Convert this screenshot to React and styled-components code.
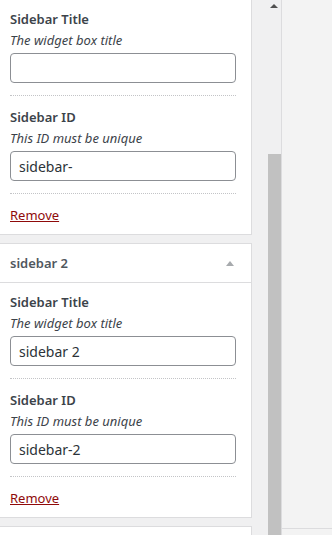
import { useLayoutEffect, useRef } from "react";
import styled, { createGlobalStyle } from "styled-components";

const GlobalStyle = createGlobalStyle`
  html, body {
    margin: 0;
    padding: 0;
    height: 100%;
    overflow: hidden;
  }
  body {
    background: #f3f3f3;
    font-family: "Noto Sans", "Open Sans", sans-serif;
    font-size: 13px;
    color: #1d2327;
  }
`;

const Screen = styled.div`
  display: flex;
  height: 535px;
`;

const Panel = styled.div`
  display: flex;
  width: 281px;
  flex-shrink: 0;
  background: #f0f0f1;
  border-right: 1px solid #dcdcde;
`;

const Viewport = styled.div`
  width: 266px;
  height: 535px;
  overflow: hidden;
`;

const List = styled.div`
  display: flex;
  flex-direction: column;
  gap: 8px;
`;

const Card = styled.section`
  width: 252px;
  box-sizing: border-box;
  background: #fff;
  border: 1px solid #dcdcde;
  border-left: 0;
  min-height: ${(p) => (p.$stub ? "20px" : "auto")};
`;

const CardHeader = styled.header`
  display: flex;
  align-items: center;
  justify-content: space-between;
  height: 38px;
  padding: 0 14px 0 10px;
  border-bottom: 1px solid #dcdcde;
  font-weight: 600;
  color: #50575e;
`;

const Toggle = styled.span`
  display: flex;
  justify-content: center;
  width: 14px;

  &::before {
    content: "";
    border-left: 4px solid transparent;
    border-right: 4px solid transparent;
    border-bottom: 5px solid #a7aaad;
  }
`;

const CardBody = styled.div`
  padding: 0 15px 0 10px;
`;

const Field = styled.div`
  padding: ${(p) => (p.$first ? "9px" : "11px")} 0 12px;
  border-bottom: 1px dotted #c3c4c7;
`;

const Label = styled.div`
  font-weight: 600;
  line-height: 21px;
  color: #3c434a;
`;

const Hint = styled.div`
  font-style: italic;
  line-height: 21px;
  color: #3c434a;
`;

const Input = styled.input`
  display: block;
  width: 100%;
  height: 30px;
  box-sizing: border-box;
  margin-top: 2px;
  padding: 0 8px;
  border: 1px solid #8c8f94;
  border-radius: 4px;
  background: #fff;
  font-family: inherit;
  font-size: 14px;
  color: #2c3338;
  outline: none;
`;

const Actions = styled.div`
  padding: 11px 0 9px;
  line-height: 20px;
`;

const RemoveLink = styled.a`
  color: #8f0a0a;
  text-decoration: underline;
  cursor: pointer;
`;

const Scrollbar = styled.div`
  display: flex;
  flex-direction: column;
  align-items: center;
  width: 15px;
`;

const ArrowUp = styled.div`
  display: flex;
  justify-content: center;
  align-items: center;
  height: 14px;
  width: 15px;

  &::before {
    content: "";
    margin-top: -2px;
    border-left: 4px solid transparent;
    border-right: 4px solid transparent;
    border-bottom: 4px solid #505050;
  }
`;

const Thumb = styled.div`
  width: 13px;
  flex: 1;
  margin-top: 140px;
  margin-left: 1px;
  background: #c1c1c1;
`;

const Side = styled.div`
  flex: 1;
  display: flex;
  flex-direction: column;
  justify-content: flex-end;
`;

const SideFooter = styled.div`
  height: 6px;
  border-top: 1px solid #dcdcde;
`;

const sidebars = [
  { name: "", title: "", id: "sidebar-" },
  { name: "sidebar 2", title: "sidebar 2", id: "sidebar-2" },
];

const SidebarCard = ({ item }) => (
  <Card>
    <CardHeader>
      <span>{item.name}</span>
      <Toggle />
    </CardHeader>
    <CardBody>
      <Field $first>
        <Label>Sidebar Title</Label>
        <Hint>The widget box title</Hint>
        <Input type="text" defaultValue={item.title} />
      </Field>
      <Field>
        <Label>Sidebar ID</Label>
        <Hint>This ID must be unique</Hint>
        <Input type="text" defaultValue={item.id} />
      </Field>
      <Actions>
        <RemoveLink>Remove</RemoveLink>
      </Actions>
    </CardBody>
  </Card>
);

const App = () => {
  const viewRef = useRef(null);

  useLayoutEffect(() => {
    if (viewRef.current) viewRef.current.scrollTop = 40;
  }, []);

  return (
    <>
      <GlobalStyle />
      <Screen>
        <Panel>
          <Viewport ref={viewRef}>
            <List>
              {sidebars.map((s) => (
                <SidebarCard key={s.id} item={s} />
              ))}
              <Card $stub />
            </List>
          </Viewport>
          <Scrollbar>
            <ArrowUp />
            <Thumb />
          </Scrollbar>
        </Panel>
        <Side>
          <SideFooter />
        </Side>
      </Screen>
    </>
  );
};

export default App;
